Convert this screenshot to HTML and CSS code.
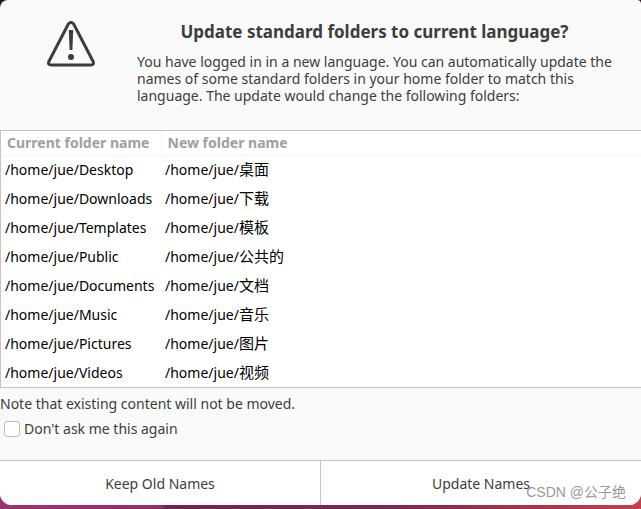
FILE: index.html
```html
<!DOCTYPE html>
<html lang="en">
<head>
    <meta charset="UTF-8">
    <meta name="viewport" content="width=device-width, initial-scale=1.0">
    <title>Update standard folders</title>
    <link rel="stylesheet" href="styles.css">
</head>
<body>
    <main class="dialog">
        <header class="message">
            <svg class="warning-icon" viewBox="0 0 48 46" aria-hidden="true">
                <path d="M21.2 3.2 2 40.2Q.4 44 4.2 44H43.8Q47.6 44 46 40.2L26.8 3.2Q24 -.4 21.2 3.2Z" fill="none" stroke="#3d3d3d" stroke-width="3" stroke-linejoin="round"/>
                <path d="M21.8 9h4.4l-.8 20h-2.8z" fill="#3d3d3d"/>
                <circle cx="24" cy="36" r="3" fill="#3d3d3d"/>
            </svg>
            <div class="message-text">
                <h1>Update standard folders to current language?</h1>
                <p>
                    You have logged in in a new language. You can automatically update the<br>
                    names of some standard folders in your home folder to match this<br>
                    language. The update would change the following folders:
                </p>
            </div>
        </header>

        <div class="folders">
            <table>
                <thead>
                    <tr><th class="current">Current folder name</th><th>New folder name</th></tr>
                </thead>
                <tbody>
                    <tr><td>/home/jue/Desktop</td><td>/home/jue/<span lang="zh">桌面</span></td></tr>
                    <tr><td>/home/jue/Downloads</td><td>/home/jue/<span lang="zh">下载</span></td></tr>
                    <tr><td>/home/jue/Templates</td><td>/home/jue/<span lang="zh">模板</span></td></tr>
                    <tr><td>/home/jue/Public</td><td>/home/jue/<span lang="zh">公共的</span></td></tr>
                    <tr><td>/home/jue/Documents</td><td>/home/jue/<span lang="zh">文档</span></td></tr>
                    <tr><td>/home/jue/Music</td><td>/home/jue/<span lang="zh">音乐</span></td></tr>
                    <tr><td>/home/jue/Pictures</td><td>/home/jue/<span lang="zh">图片</span></td></tr>
                    <tr><td>/home/jue/Videos</td><td>/home/jue/<span lang="zh">视频</span></td></tr>
                </tbody>
            </table>
        </div>

        <div class="options">
            <p>Note that existing content will not be moved.</p>
            <label class="check" for="dont-ask">
                <input type="checkbox" id="dont-ask">
                Don't ask me this again
            </label>
        </div>

        <footer class="actions">
            <button type="button">Keep Old Names</button>
            <button type="button">Update Names</button>
        </footer>
    </main>
    <div class="watermark">CSDN @公子绝</div>
</body>
</html>
```

FILE: styles.css
```css
* {
    margin: 0;
    padding: 0;
    box-sizing: border-box;
}

body {
    position: relative;
    display: flex;
    flex-direction: column;
    min-height: 100vh;
    padding-bottom: 4px;
    background:
        linear-gradient(#3a0828, #3a0828) top / 100% 20px no-repeat,
        linear-gradient(90deg, #9a3570 0, #93316c 25%, #74234f 26%, #7b2856 60%, #c0434a 100%);
    color: #3d3d3d;
    font-family: "Noto Sans", "Noto Sans CJK SC", sans-serif;
    font-size: 14px;
    line-height: 17px;
}

.dialog {
    flex: 1;
    display: flex;
    flex-direction: column;
    background: #fafafa;
    border-radius: 8px 4px 12px 12px;
    overflow: hidden;
}

.message {
    display: flex;
    gap: 42px;
    padding: 21px 34px 26px 47px;
}

.warning-icon {
    flex: none;
    width: 48px;
    height: 46px;
}

.message-text {
    flex: 1;
    white-space: nowrap;
}

.message-text h1 {
    margin-bottom: 10px;
    font-size: 17px;
    line-height: 22px;
    text-align: center;
}

/* Folder list */
.folders {
    background: #fff;
    border: 1px solid #c4c4c4;
    border-right: none;
}

table {
    width: 100%;
    border-collapse: collapse;
    table-layout: fixed;
    white-space: nowrap;
}

th {
    height: 24px;
    padding: 0 6px;
    border-bottom: 1px solid #f4f4f4;
    color: #a0a0a0;
    text-align: left;
}

.current {
    width: 160px;
    border-right: 1px solid #f4f4f4;
}

td {
    height: 29px;
    padding: 0 4px;
    color: #000;
}

td span {
    font-size: 15px;
}

.options {
    flex: 1;
    padding: 7px 0 20px;
}

.check {
    display: flex;
    align-items: center;
    gap: 4px;
    width: fit-content;
    margin: 8px 4px 0;
}

.check input {
    appearance: none;
    width: 16px;
    height: 16px;
    background: #fff;
    border: 1px solid #bdbdbd;
    border-radius: 3px;
}

.check input:checked {
    background: #93316c;
}

.actions {
    display: flex;
    border-top: 1px solid #c4c4c4;
}

.actions button {
    flex: 1;
    height: 44px;
    background: #fff;
    border: none;
    color: inherit;
    font: inherit;
}

.actions button + button {
    border-left: 1px solid #c4c4c4;
}

.actions button:hover {
    background: #f4f4f4;
}

.watermark {
    position: absolute;
    right: 15px;
    bottom: 8px;
    color: #999;
    font-family: "Liberation Sans", "Noto Sans CJK SC", sans-serif;
    font-size: 14px;
    pointer-events: none;
}
```
